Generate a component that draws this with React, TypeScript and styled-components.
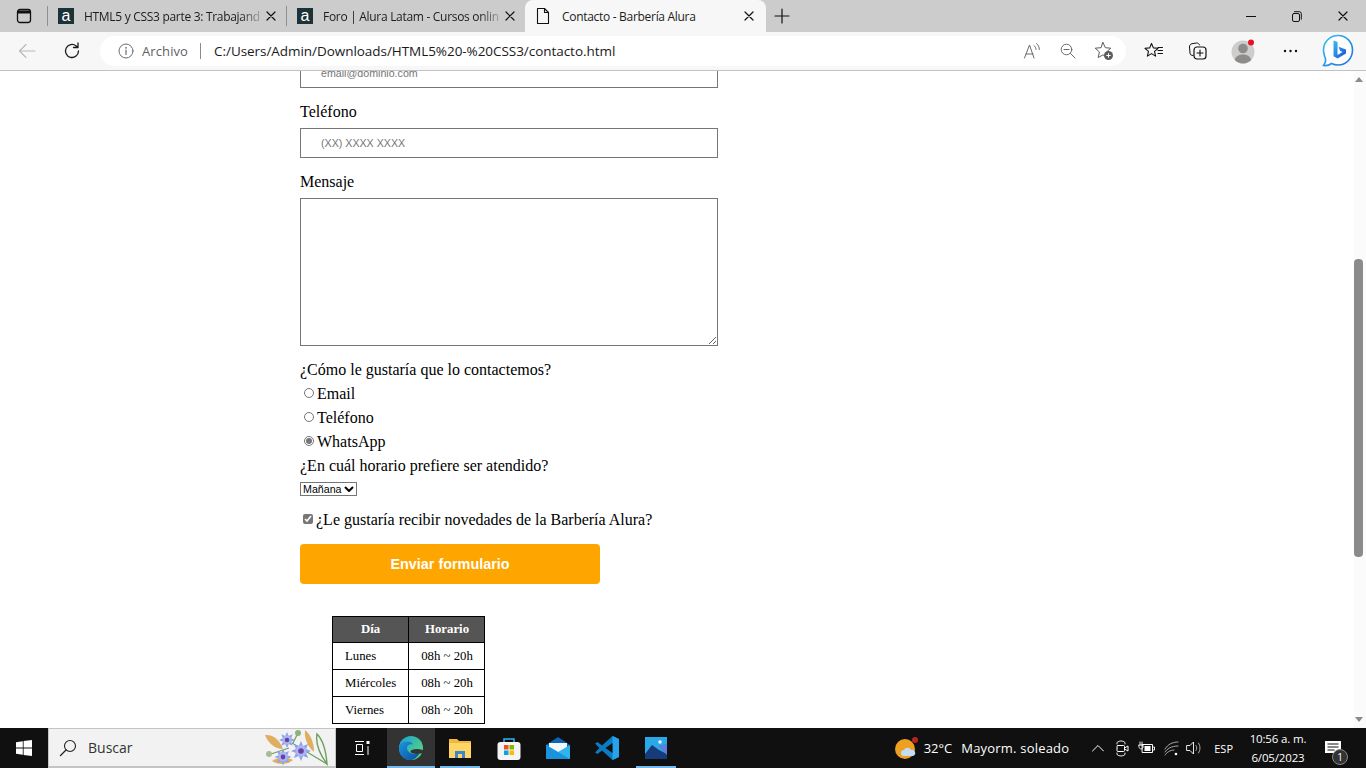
import React from "react";
import styled, { createGlobalStyle } from "styled-components";

const uiFont = `"Open Sans", "Noto Sans", "Liberation Sans", sans-serif`;

const GlobalStyle = createGlobalStyle`
  html, body {
    margin: 0;
    padding: 0;
    height: 100%;
    overflow: hidden;
    background: #fff;
  }
  * { box-sizing: border-box; }
`;

const Screen = styled.div`
  width: 1366px;
  height: 768px;
  display: flex;
  flex-direction: column;
  overflow: hidden;
`;

/* ---- browser tabs ---- */
const TabStrip = styled.div`
  height: 32px;
  flex: none;
  background: #cccccc;
  display: flex;
  align-items: stretch;
  font-family: ${uiFont};
  font-size: 12px;
`;
const SideToggle = styled.div`
  width: 47px;
  display: flex;
  align-items: center;
  justify-content: center;
`;
const TabDivider = styled.div`
  width: 1px;
  height: 20px;
  margin-top: 6px;
  background: #8f8f8f;
`;
const Tab = styled.div<{ $active?: boolean }>`
  width: ${(p) => (p.$active ? "241px" : "238px")};
  display: flex;
  align-items: center;
  padding: ${(p) => (p.$active ? "0 12px 0 10px" : "0 10px")};
  color: #1c1c1c;
  background: ${(p) => (p.$active ? "#f7f7f7" : "transparent")};
  border-radius: ${(p) => (p.$active ? "8px 8px 0 0" : "0")};
`;
const Favicon = styled.span`
  width: 16px;
  height: 16px;
  flex: none;
  background: #1d3139;
  color: #fff;
  font: 16px/15px "Liberation Sans", sans-serif;
  text-align: center;
`;
const TabTitle = styled.span<{ $fade?: boolean }>`
  flex: 1;
  margin-left: ${(p) => (p.$fade ? "10px" : "11px")};
  white-space: nowrap;
  letter-spacing: -0.3px;
  ${(p) =>
    p.$fade
      ? "mask-image: linear-gradient(90deg, #000 86%, transparent 100%);"
      : ""}
`;
const NewTab = styled.div`
  width: 32px;
  display: flex;
  align-items: center;
  justify-content: center;
`;
const WindowControls = styled.div`
  margin-left: auto;
  display: flex;
`;
const WindowButton = styled.div`
  width: 46px;
  display: flex;
  align-items: center;
  justify-content: center;
`;

/* ---- address bar ---- */
const Toolbar = styled.div`
  height: 39px;
  flex: none;
  background: #f7f7f7;
  border-bottom: 1px solid #c2c2c2;
  display: flex;
  align-items: center;
  font-family: ${uiFont};
  font-size: 14px;
  padding-bottom: 1px;
`;
const NavButton = styled.div<{ $w: number }>`
  width: ${(p) => p.$w}px;
  flex: none;
  display: flex;
  align-items: center;
  justify-content: center;
`;
const NavGroup = styled.div`
  width: 100px;
  flex: none;
  display: flex;
  padding-left: 4px;
`;
const AddressPill = styled.div`
  width: 1026px;
  height: 30px;
  flex: none;
  background: #fff;
  border-radius: 15px;
  display: flex;
  align-items: center;
  padding-left: 18px;
`;
const Origin = styled.span`
  color: #5f5f5f;
  margin-left: 8px;
  font-size: 13px;
  letter-spacing: 0.1px;
`;
const OriginDivider = styled.span`
  width: 1px;
  height: 16px;
  background: #8a8a8a;
  margin: 0 13px 0 12px;
`;
const Url = styled.span`
  color: #1a1a1a;
  font-size: 13.5px;
  letter-spacing: -0.05px;
  white-space: nowrap;
`;
const PillActions = styled.div`
  margin-left: auto;
  display: flex;
  align-items: center;
  padding-right: 4px;
`;
const ToolbarRight = styled.div`
  flex: 1;
  display: flex;
  align-items: center;
  padding-left: 6px;
`;

/* ---- page ---- */
const PageRow = styled.div`
  flex: 1;
  min-height: 0;
  display: flex;
  background: #fff;
`;
const Viewport = styled.div`
  flex: 1;
  overflow: hidden;
  font-family: "Liberation Serif", serif;
  font-size: 16px;
  line-height: 18px;
  color: #000;
`;
const ContactForm = styled.form`
  width: 418px;
  margin: -13px 0 0 300px;
`;
const FieldLabel = styled.label<{ $gap?: number }>`
  display: block;
  margin-bottom: ${(p) => p.$gap ?? 7}px;
`;
const TextField = styled.input`
  display: block;
  width: 418px;
  height: 30px;
  margin: 0 0 15px;
  padding: 0 20px;
  border: 1px solid #767676;
  border-radius: 0;
  background: #fff;
  font: 10.67px "Liberation Sans", sans-serif;
  &::placeholder { color: #757575; opacity: 1; }
`;
const MessageField = styled.textarea`
  display: block;
  width: 418px;
  height: 148px;
  margin: 0 0 15px;
  padding: 10px 20px;
  border: 1px solid #767676;
  border-radius: 0;
  background: #fff;
`;
const OptionRow = styled.label`
  display: flex;
  align-items: center;
  height: 18px;
  margin-bottom: 6px;
`;
const Radio = styled.input`
  width: 10px;
  height: 10px;
  margin: 0 3px 2px 4px;
  accent-color: #767676;
`;
const CheckRow = styled.label`
  display: flex;
  align-items: center;
  height: 18px;
  margin-bottom: 15px;
`;
const Check = styled.input`
  width: 10px;
  height: 10px;
  margin: 0 3px 2px 3px;
  accent-color: #767676;
`;
const SelectWrap = styled.div`
  position: relative;
  width: 57px;
  height: 14px;
  margin-bottom: 15px;
`;
const ScheduleSelect = styled.select`
  display: block;
  appearance: none;
  width: 57px;
  height: 14px;
  padding: 0 0 0 2px;
  border: 1px solid #767676;
  border-radius: 0;
  background: #fff;
  color: #000;
  font: 10.67px "Liberation Sans", sans-serif;
`;
const SelectChevron = styled.svg`
  position: absolute;
  right: 3px;
  top: 4px;
  pointer-events: none;
`;
const SubmitButton = styled.button`
  display: block;
  width: 300px;
  height: 40px;
  border: 0;
  border-radius: 4px;
  background: #ffa500;
  color: #fff;
  font: bold 14.4px "Liberation Sans", sans-serif;
`;
const HoursTable = styled.table`
  margin: 32px 0 0 332px;
  border-collapse: collapse;
  font-size: 12.8px;
  line-height: 14px;
  th, td {
    border: 1px solid #000;
    padding: 6px 12px;
    white-space: nowrap;
  }
  th:last-child, td:last-child {
    padding-right: 11px;
  }
  th {
    line-height: 13px;
    background: #555;
    color: #fff;
    font-weight: bold;
    text-align: center;
  }
`;

/* ---- scrollbar ---- */
const ScrollTrack = styled.div`
  width: 12px;
  flex: none;
  background: #fbfbfb;
  display: flex;
  flex-direction: column;
  align-items: center;
  padding: 6px 3px 6px 0;
`;
const ArrowUp = styled.div`
  border: 4.5px solid transparent;
  border-top: 0;
  border-bottom: 5px solid #8a8a8a;
`;
const ArrowDown = styled.div`
  margin-top: auto;
  border: 4.5px solid transparent;
  border-bottom: 0;
  border-top: 5px solid #8a8a8a;
`;
const Thumb = styled.div`
  width: 9px;
  height: 298px;
  margin-top: 177px;
  background: #8b8b8b;
  border-radius: 4px;
`;

/* ---- windows taskbar ---- */
const Taskbar = styled.div`
  height: 40px;
  flex: none;
  background: #101010;
  display: flex;
  align-items: stretch;
  font-family: ${uiFont};
  color: #fff;
`;
const StartButton = styled.div`
  width: 48px;
  display: flex;
  align-items: center;
  justify-content: center;
`;
const SearchBox = styled.div`
  width: 288px;
  background: #f2f2f2;
  border: 1px solid #c4c4c4;
  border-bottom: 2px solid #c4c4c4;
  display: flex;
  align-items: center;
  padding-left: 10px;
  color: #333;
  font-size: 14px;
`;
const SearchLabel = styled.span`
  margin-left: 11px;
`;
const SearchArt = styled.div`
  margin-left: auto;
  margin-right: 5px;
  display: flex;
`;
const TaskTile = styled.div<{ $w?: number; $active?: boolean; $open?: boolean }>`
  width: ${(p) => p.$w ?? 49}px;
  flex: none;
  display: flex;
  align-items: center;
  justify-content: center;
  background: ${(p) => (p.$active ? "#333333" : "transparent")};
  border-bottom: 2px solid ${(p) => (p.$open ? "#76b9ed" : "transparent")};
  border-top: 2px solid transparent;
`;
const Tray = styled.div`
  margin-left: auto;
  display: flex;
  align-items: center;
  font-size: 13px;
`;
const Weather = styled.div`
  display: flex;
  align-items: center;
  margin-right: 16px;
`;
const Temp = styled.span`
  margin: 0 9px 0 5px;
`;
const WeatherText = styled.span`
  letter-spacing: 0.2px;
`;
const TrayIcon = styled.div<{ $w: number }>`
  width: ${(p) => p.$w}px;
  display: flex;
  justify-content: center;
`;
const Lang = styled.span`
  font-size: 11px;
  margin: 0 15px 0 9px;
`;
const Clock = styled.div`
  width: 60px;
  text-align: center;
  font-size: 11.5px;
  line-height: 19px;
  letter-spacing: -0.15px;
`;
const Notify = styled.div`
  width: 58px;
  height: 100%;
  display: flex;
  align-items: center;
  justify-content: center;
  position: relative;
  padding-right: 8px;
`;
const NotifyBadge = styled.span`
  position: absolute;
  left: 24px;
  top: 21px;
  width: 16px;
  height: 16px;
  border-radius: 50%;
  background: #333;
  border: 1px solid #888;
  font-size: 10px;
  line-height: 14px;
  text-align: center;
`;

/* ---- drawings ---- */
const Line = { fill: "none", stroke: "currentColor", strokeLinecap: "round", strokeLinejoin: "round" } as const;

const SidebarIcon = () => (
  <svg width="16" height="16" viewBox="0 0 16 16" color="#111">
    <rect x="1.5" y="1.5" width="13" height="13" rx="2.5" {...Line} strokeWidth="1.3" />
    <path d="M2 2.5h12v3H2z" fill="#111" />
  </svg>
);
const CloseX = ({ size = 10 }: { size?: number }) => (
  <svg width={size} height={size} viewBox="0 0 10 10" color="#111">
    <path d="M1 1l8 8M9 1L1 9" {...Line} strokeWidth="1.2" />
  </svg>
);
const DocIcon = () => (
  <svg width="16" height="18" viewBox="0 0 16 18" color="#111">
    <path d="M2.5 1.5h7l4 4v11h-11zM9.5 1.5v4h4" {...Line} strokeWidth="1.1" />
  </svg>
);
const PlusIcon = () => (
  <svg width="16" height="16" viewBox="0 0 16 16" color="#111">
    <path d="M8 1v14M1 8h14" {...Line} strokeWidth="1.2" />
  </svg>
);
const MinIcon = () => (
  <svg width="10" height="10" viewBox="0 0 10 10" color="#111"><path d="M0 5.5h10" {...Line} /></svg>
);
const RestoreIcon = () => (
  <svg width="10" height="11" viewBox="0 0 10 11" color="#111">
    <rect x=".5" y="2.5" width="7" height="8" rx="1.5" {...Line} />
    <path d="M2.5.7h4.800a2 2 0 0 1 2 2v5.500" {...Line} />
  </svg>
);
const BackArrow = () => (
  <svg width="18" height="16" viewBox="0 0 18 16" color="#b9b9b9">
    <path d="M1.500 8h15.500M8 1.500L1.500 8 8 14.500" {...Line} strokeWidth="1.1" />
  </svg>
);
const ReloadIcon = () => (
  <svg width="18" height="18" viewBox="0 0 18 18" color="#1a1a1a">
    <path d="M15.500 9a6.500 6.500 0 1 1-2.300-5L15 5.500M15 1v4.500h-4.500" {...Line} strokeWidth="1.3" />
  </svg>
);
const InfoIcon = () => (
  <svg width="16" height="16" viewBox="0 0 16 16" color="#6b6b6b">
    <circle cx="8" cy="8" r="7" {...Line} />
    <path d="M8 7v4.500" {...Line} strokeWidth="1.200" />
    <circle cx="8" cy="4.800" r=".9" fill="#6b6b6b" />
  </svg>
);
const ReadAloudIcon = () => (
  <svg width="18" height="18" viewBox="0 0 18 18" color="#6a6a6a">
    <path d="M1.500 16L6.500 3l4.500 13M3 12h7" {...Line} />
    <path d="M11 3.500c1.300 1 2 2.500 2 4M13.500 1.500c1.800 1.500 2.800 3.500 2.800 6" {...Line} />
  </svg>
);
const ZoomOutIcon = () => (
  <svg width="16" height="16" viewBox="0 0 16 16" color="#6a6a6a">
    <circle cx="6.500" cy="6.500" r="5.300" {...Line} />
    <path d="M4 6.500h5M10.500 10.500L15 15" {...Line} />
  </svg>
);
const FavAddIcon = () => (
  <svg width="20" height="20" viewBox="0 0 20 20" color="#5c5c5c">
    <path d="M9 1.500l2.300 5.200 5.500.5-4.200 3.700 1.200 5.500L9 13.900l-4.800 2.600 1.200-5.500L1.200 7.200l5.500-.5z" {...Line} />
    <circle cx="14.500" cy="14.500" r="4.500" fill="#5c5c5c" />
    <path d="M14.500 12.300v4.400M12.300 14.500h4.400" stroke="#fff" />
  </svg>
);
const FavListIcon = () => (
  <svg width="20" height="18" viewBox="0 0 20 18" color="#111">
    <path d="M7.500 1.500l1.900 4.400 4.700.4-3.600 3.100 1.100 4.700-4.100-2.500-4.100 2.500 1.100-4.700L1 6.300l4.700-.4z" {...Line} strokeWidth="1.100" />
    <path d="M14 5.500h4.500M14 8.500h4.500M14 11.500h4.500" {...Line} />
  </svg>
);
const CollectionsIcon = () => (
  <svg width="20" height="20" viewBox="0 0 20 20" color="#111">
    <path d="M5 14.500c-2 0-3-1-3-2.500L1.500 6c0-2 1-3 2.500-3.300L8.500 2c1.500 0 2.500.5 3 2" {...Line} />
    <rect x="6" y="6" width="12" height="12" rx="3" {...Line} strokeWidth="1.200" />
    <path d="M12 9v6M9 12h6" {...Line} strokeWidth="1.100" />
  </svg>
);
const ProfileIcon = () => (
  <svg width="26" height="26" viewBox="0 0 26 26">
    <circle cx="12" cy="14" r="11.500" fill="#cfcdcb" />
    <circle cx="12" cy="10.500" r="4.800" fill="#8e8c8a" />
    <path d="M3.800 22c1-4 4.500-5.500 8.200-5.500s7.200 1.500 8.200 5.500a11.500 11.500 0 0 1-16.400 0z" fill="#8e8c8a" />
    <circle cx="20" cy="4.500" r="3" fill="#e81123" />
  </svg>
);
const MoreDots = () => (
  <svg width="16" height="4" viewBox="0 0 16 4">
    <circle cx="2" cy="2" r="1.200" fill="#111" />
    <circle cx="7.500" cy="2" r="1.200" fill="#111" />
    <circle cx="13" cy="2" r="1.200" fill="#111" />
  </svg>
);
const BingIcon = () => (
  <svg width="32" height="34" viewBox="0 0 32 34">
    <defs>
      <linearGradient id="bingRing" x1="0" y1="0" x2="1" y2="1">
        <stop offset="0" stopColor="#35c1f1" />
        <stop offset="1" stopColor="#1b6fdc" />
      </linearGradient>
      <linearGradient id="bingB" x1="0" y1="0" x2="1" y2="1">
        <stop offset="0" stopColor="#37bdf0" />
        <stop offset="1" stopColor="#1d4fd8" />
      </linearGradient>
    </defs>
    <path d="M16 1.500C8 1.500 1.500 8 1.500 16c0 3 1 6 2 9 .5 2-.5 4.500-2 6.500 3 .5 6-.5 8-2 2 1 4.500 1.500 6.500 1.500 8 0 14.500-6.500 14.500-15S24 1.500 16 1.500z" fill="#fff" stroke="url(#bingRing)" strokeWidth="1.600" />
    <path d="M11.500 6.500l4 1.500v13l5-3-2.500-1.200-1.500-4 7.500 2.700v4l-8.500 5-4-2.300z" fill="url(#bingB)" />
  </svg>
);
const WindowsLogo = () => (
  <svg width="16" height="16" viewBox="0 0 16 16">
    <path d="M0 2.200l6.800-1v6.400H0zM7.600 1.100L16 0v7.600H7.600zM0 8.400h6.800v6.400l-6.800-1zM7.600 8.400H16V16l-8.400-1.100z" fill="#fff" />
  </svg>
);
const SearchIcon = () => (
  <svg width="18" height="18" viewBox="0 0 18 18" color="#222">
    <circle cx="11" cy="7" r="5.500" {...Line} strokeWidth="1.100" />
    <path d="M7 11l-5.500 5.500" {...Line} strokeWidth="1.300" />
  </svg>
);

// spiky cornflower head for the search box doodle
const petals = (cx: number, cy: number, r: number) => {
  let d = "";
  for (let i = 0; i < 16; i++) {
    const a = (i * Math.PI) / 8;
    const len = i % 2 ? r * 0.55 : r;
    d += `${i ? "L" : "M"}${(cx + Math.cos(a) * len).toFixed(1)} ${(cy + Math.sin(a) * len).toFixed(1)}`;
  }
  return d + "z";
};
const Flower = ({ x, y, r }: { x: number; y: number; r: number }) => (
  <>
    <path d={petals(x, y, r)} fill="#8ea2ea" />
    <circle cx={x} cy={y} r={r * 0.55} fill="#a9b6f0" />
    <circle cx={x} cy={y} r={r * 0.28} fill="#6a3fa6" />
  </>
);
const FlowersArt = () => (
  <svg width="66" height="38" viewBox="0 0 66 38">
    <path d="M1 6c8-1 15 5 18 14-8 0-15-6-18-14z" fill="#dfae5f" />
    <path d="M41 1c6 5 9 13 9 22-6-5-10-13-9-22z" fill="#dfae5f" />
    <path d="M8 32c6-4 15-4 21-1-6 5-15 5-21 1z" fill="#dfae5f" />
    <path d="M28 14l35 21M7 25l18-6M34 4l-5 10" fill="none" stroke="#6d9f5e" strokeWidth="1.200" />
    <path d="M53 5c6 6 9 17 10 30-6-8-12-18-10-30z" fill="none" stroke="#6d9f5e" strokeWidth="1.400" />
    <circle cx="34" cy="4" r="3" fill="#8cb37a" />
    <circle cx="5" cy="25" r="3" fill="#a7bd92" />
    <Flower x={23} y={11} r={8} />
    <Flower x={37} y={22} r={10} />
    <Flower x={19} y={28} r={8.500} />
  </svg>
);
const TaskViewIcon = () => (
  <svg width="16" height="16" viewBox="0 0 16 16" color="#fff">
    <path d="M1 1.500h9M1 14.500h9M2.500 4.500h6v7h-6z" {...Line} strokeLinecap="butt" />
    <rect x="12.500" y="1" width="3" height="3" fill="#fff" />
    <path d="M14 6.500v8" {...Line} />
  </svg>
);
const EdgeIcon = () => (
  <svg width="24" height="24" viewBox="0 0 24 24">
    <defs>
      <linearGradient id="edgeA" x1="0" y1="0" x2="1" y2="1">
        <stop offset="0" stopColor="#1a9fd6" />
        <stop offset="1" stopColor="#62e06f" />
      </linearGradient>
      <linearGradient id="edgeB" x1="0" y1="0" x2="1" y2="1">
        <stop offset="0" stopColor="#1b97e0" />
        <stop offset="1" stopColor="#0b4b9c" />
      </linearGradient>
    </defs>
    <circle cx="12" cy="12" r="12" fill="url(#edgeA)" />
    <ellipse cx="18" cy="15.500" rx="6.500" ry="2.500" fill="#333" />
    <path d="M.5 9c2-3 6-4 9.500-3.500 2 .4 3.500 1.500 4 3-3-1-6 .5-6 3.500 0 4 5 7 12.500 5.500C18 21.500 15 24 11 24 4 24 0 18 0 12.500 0 11 .2 10 .5 9z" fill="url(#edgeB)" />
  </svg>
);
const ExplorerIcon = () => (
  <svg width="24" height="22" viewBox="0 0 24 22">
    <path d="M1 2h8l2 2h12v17H1z" fill="#f0b93e" />
    <path d="M1 6h22v15H1z" fill="#ffd566" />
    <path d="M7 21v-7h10v7h-3v-4h-4v4z" fill="#3f87cc" />
  </svg>
);
const StoreIcon = () => (
  <svg width="24" height="24" viewBox="0 0 24 24">
    <path d="M7 6V3h10v3" fill="none" stroke="#29b6ef" strokeWidth="1.500" />
    <rect x="0.500" y="6" width="23" height="18" rx="3" fill="#f4f4f4" />
    <path d="M7 9h4.500v4.500H7z" fill="#f25022" />
    <path d="M12.500 9H17v4.500h-4.500z" fill="#7fba00" />
    <path d="M7 14.500h4.500V19H7z" fill="#00a4ef" />
    <path d="M12.500 14.500H17V19h-4.500z" fill="#ffb900" />
  </svg>
);
const MailIcon = () => (
  <svg width="24" height="22" viewBox="0 0 24 22">
    <path d="M0 8L12 0l12 8v2H0z" fill="#0f65b5" />
    <path d="M3 6h18v6l-9 4-9-4z" fill="#f4f7fb" />
    <path d="M0 8l12 7 12-7v14H0z" fill="#2fb5ee" />
    <path d="M0 8l24 14H0z" fill="#1a93dd" />
  </svg>
);
const VsCodeIcon = () => (
  <svg width="24" height="24" viewBox="0 0 24 24">
    <path d="M17.500 0L24 3v18l-6.500 3L7 14.500 2.500 18 0 16.500 4.500 12 0 7.500 2.500 6 7 9.500z" fill="#0a7cc4" />
    <path d="M17.500 0L24 3v18l-6.500 3z" fill="#28a2ea" />
    <path d="M17.500 7L10.500 12l7 5z" fill="#101010" />
  </svg>
);
const PhotosIcon = () => (
  <svg width="22" height="22" viewBox="0 0 22 22">
    <rect width="22" height="22" fill="#2aa9e8" />
    <circle cx="15" cy="5" r="1.800" fill="#e8f4fc" />
    <path d="M0 17l7-9 7 5 8 4v5H0z" fill="#173a7a" />
    <path d="M13 9l9-2v11z" fill="#5e7fd8" />
  </svg>
);
const WeatherIcon = () => (
  <svg width="24" height="24" viewBox="0 0 24 24">
    <circle cx="10" cy="13" r="10" fill="#f0a020" />
    <circle cx="20" cy="4" r="3" fill="#b5261e" />
    <path d="M9 20a3 3 0 0 1 0-6c1-3 6-3 7 0a3 3 0 0 1 2 6z" fill="#c4dcf4" />
  </svg>
);
const ChevronUp = () => (
  <svg width="12" height="8" viewBox="0 0 12 8" color="#fff"><path d="M.5 7L6 1.500 11.500 7" {...Line} /></svg>
);
const MeetIcon = () => (
  <svg width="13" height="17" viewBox="0 0 13 17" color="#fff">
    <path d="M1 4V2.500C3 .5 7 .5 9 2.500V4M1 13v1.500c2 2 6 2 8 0V13" {...Line} strokeWidth=".9" />
    <rect x="1" y="5.500" width="7.500" height="6" rx="1" {...Line} />
    <path d="M8.500 8l3.500-2v5l-3.500-2" {...Line} />
  </svg>
);
const BatteryIcon = () => (
  <svg width="17" height="14" viewBox="0 0 17 14" color="#fff">
    <rect x="4.500" y="3.500" width="10" height="8" {...Line} />
    <rect x="6.500" y="5" width="6" height="5" fill="#fff" />
    <path d="M15 6h1.500v3H15M2 1v3M4 1v3M1 4h4v2c0 1-1 2-2 2S1 7 1 6z" {...Line} strokeWidth=".9" />
  </svg>
);
const WifiIcon = () => (
  <svg width="15" height="15" viewBox="0 0 15 15" color="#bbb">
    <path d="M1 8c3-5 8-7 13-7M1 11c2-3 6-6 13-6M1 14c1-2 5-5 9-5" {...Line} strokeWidth=".9" />
    <circle cx="12" cy="13" r="1.300" fill="#fff" />
  </svg>
);
const VolumeIcon = () => (
  <svg width="16" height="16" viewBox="0 0 16 16" color="#fff">
    <path d="M1 5.500h3L7.500 2v12L4 10.500H1z" {...Line} strokeWidth=".9" />
    <path d="M10 5.500c1 1.500 1 3.500 0 5M12.500 3c2 3 2 7 0 10" {...Line} strokeWidth=".9" color="#bbb" />
  </svg>
);
const NotifyIcon = () => (
  <svg width="16" height="14" viewBox="0 0 16 14">
    <path d="M0 0h16v12H0z" fill="#fff" />
    <path d="M2.500 3h11M2.500 6h11M2.500 9h7" stroke="#101010" />
  </svg>
);

const rows = ["Lunes", "Miércoles", "Viernes"];

export default function App() {
  return (
    <Screen>
      <GlobalStyle />
      <TabStrip>
        <SideToggle><SidebarIcon /></SideToggle>
        <TabDivider />
        <Tab>
          <Favicon>a</Favicon>
          <TabTitle $fade>HTML5 y CSS3 parte 3: Trabajand</TabTitle>
          <CloseX />
        </Tab>
        <TabDivider />
        <Tab>
          <Favicon>a</Favicon>
          <TabTitle $fade>Foro | Alura Latam - Cursos onlin</TabTitle>
          <CloseX />
        </Tab>
        <Tab $active>
          <DocIcon />
          <TabTitle>Contacto - Barbería Alura</TabTitle>
          <CloseX />
        </Tab>
        <NewTab><PlusIcon /></NewTab>
        <WindowControls>
          <WindowButton><MinIcon /></WindowButton>
          <WindowButton><RestoreIcon /></WindowButton>
          <WindowButton><CloseX /></WindowButton>
        </WindowControls>
      </TabStrip>

      <Toolbar>
        <NavGroup>
          <NavButton $w={45}><BackArrow /></NavButton>
          <NavButton $w={45}><ReloadIcon /></NavButton>
        </NavGroup>
        <AddressPill>
          <InfoIcon />
          <Origin>Archivo</Origin>
          <OriginDivider />
          <Url>C:/Users/Admin/Downloads/HTML5%20-%20CSS3/contacto.html</Url>
          <PillActions>
            <NavButton $w={36}><ReadAloudIcon /></NavButton>
            <NavButton $w={36}><ZoomOutIcon /></NavButton>
            <NavButton $w={36}><FavAddIcon /></NavButton>
          </PillActions>
        </AddressPill>
        <ToolbarRight>
          <NavButton $w={44}><FavListIcon /></NavButton>
          <NavButton $w={44}><CollectionsIcon /></NavButton>
          <NavButton $w={48}><ProfileIcon /></NavButton>
          <NavButton $w={45}><MoreDots /></NavButton>
          <NavButton $w={49}><BingIcon /></NavButton>
        </ToolbarRight>
      </Toolbar>

      <PageRow>
        <Viewport>
          <ContactForm>
            <TextField type="email" placeholder="email@dominio.com" />
            <FieldLabel>Teléfono</FieldLabel>
            <TextField type="tel" placeholder="(XX) XXXX XXXX" />
            <FieldLabel>Mensaje</FieldLabel>
            <MessageField />
            <FieldLabel $gap={6}>¿Cómo le gustaría que lo contactemos?</FieldLabel>
            <OptionRow><Radio type="radio" name="contact" />Email</OptionRow>
            <OptionRow><Radio type="radio" name="contact" />Teléfono</OptionRow>
            <OptionRow><Radio type="radio" name="contact" defaultChecked />WhatsApp</OptionRow>
            <FieldLabel>¿En cuál horario prefiere ser atendido?</FieldLabel>
            <SelectWrap>
              <ScheduleSelect defaultValue="Mañana">
                <option>Mañana</option>
                <option>Tarde</option>
                <option>Noche</option>
              </ScheduleSelect>
              <SelectChevron width="10" height="6" viewBox="0 0 10 6">
                <path d="M1 1l4 4 4-4" fill="none" stroke="#000" strokeWidth="2" />
              </SelectChevron>
            </SelectWrap>
            <CheckRow><Check type="checkbox" defaultChecked />¿Le gustaría recibir novedades de la Barbería Alura?</CheckRow>
            <SubmitButton type="button">Enviar formulario</SubmitButton>
          </ContactForm>
          <HoursTable>
            <thead>
              <tr><th>Día</th><th>Horario</th></tr>
            </thead>
            <tbody>
              {rows.map((r) => (
                <tr key={r}><td>{r}</td><td>08h ~ 20h</td></tr>
              ))}
            </tbody>
          </HoursTable>
        </Viewport>
        <ScrollTrack>
          <ArrowUp />
          <Thumb />
          <ArrowDown />
        </ScrollTrack>
      </PageRow>

      <Taskbar>
        <StartButton><WindowsLogo /></StartButton>
        <SearchBox>
          <SearchIcon />
          <SearchLabel>Buscar</SearchLabel>
          <SearchArt><FlowersArt /></SearchArt>
        </SearchBox>
        <TaskTile $w={51}><TaskViewIcon /></TaskTile>
        <TaskTile $w={48} $active $open><EdgeIcon /></TaskTile>
        <TaskTile $w={5} />
        <TaskTile $w={40} $open><ExplorerIcon /></TaskTile>
        <TaskTile $w={9} />
        <TaskTile $w={40}><StoreIcon /></TaskTile>
        <TaskTile $w={9} />
        <TaskTile $w={40}><MailIcon /></TaskTile>
        <TaskTile $w={9} />
        <TaskTile $w={40}><VsCodeIcon /></TaskTile>
        <TaskTile $w={9} />
        <TaskTile $w={40} $open><PhotosIcon /></TaskTile>
        <Tray>
          <Weather>
            <WeatherIcon />
            <Temp>32°C</Temp>
            <WeatherText>Mayorm. soleado</WeatherText>
          </Weather>
          <TrayIcon $w={26}><ChevronUp /></TrayIcon>
          <TrayIcon $w={22}><MeetIcon /></TrayIcon>
          <TrayIcon $w={26}><BatteryIcon /></TrayIcon>
          <TrayIcon $w={24}><WifiIcon /></TrayIcon>
          <TrayIcon $w={22}><VolumeIcon /></TrayIcon>
          <Lang>ESP</Lang>
          <Clock>10:56 a. m.<br />6/05/2023</Clock>
          <Notify>
            <NotifyIcon />
            <NotifyBadge>1</NotifyBadge>
          </Notify>
        </Tray>
      </Taskbar>
    </Screen>
  );
}
